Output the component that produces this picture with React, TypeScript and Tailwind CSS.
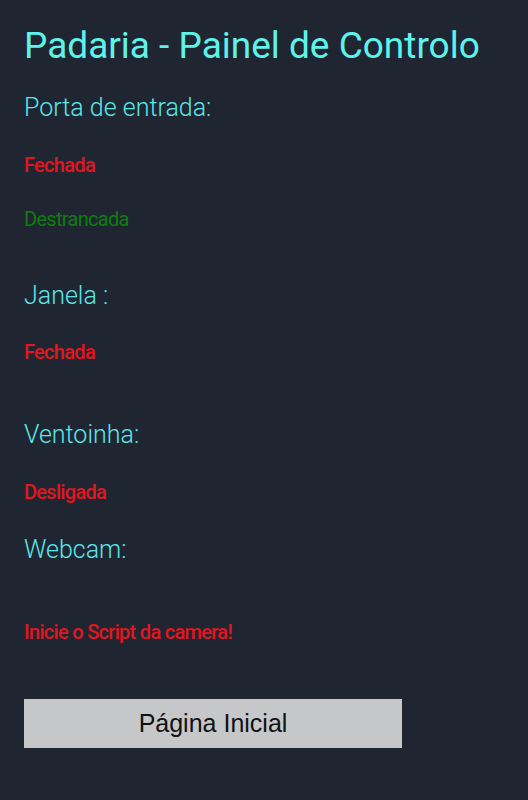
import React from "react";

const label = "text-[25px] leading-[28px] font-light text-[#5ce6e8]";
const bad = "text-[20px] leading-[24px] font-medium tracking-[-0.7px] text-[#e3161f]";
const good = "text-[20px] leading-[24px] tracking-[-0.7px] text-[#0e7d10]";

export default function App() {
  return (
    <div className="min-h-[800px] w-full bg-[#1f2632] px-6 pt-[26px] font-['Roboto',sans-serif]">
      <h1 className="text-[37px] leading-[40px] font-normal text-[#5ef3ea]">
        Padaria - Painel de Controlo
      </h1>

      <h2 className={`mt-[28px] ${label}`}>Porta de entrada:</h2>
      <p className={`mt-[31px] ${bad}`}>Fechada</p>
      <p className={`mt-[30px] ${good}`}>Destrancada</p>

      <h2 className={`mt-[51px] ${label}`}>Janela :</h2>
      <p className={`mt-[30px] ${bad}`}>Fechada</p>

      <h2 className={`mt-[57px] ${label}`}>Ventoinha:</h2>
      <p className={`mt-[31px] ${bad}`}>Desligada</p>

      <h2 className={`mt-[32px] ${label}`}>Webcam:</h2>
      <p className={`mt-[56px] ${bad}`}>Inicie o Script da camera!</p>

      <button className="mt-[55px] flex h-[49px] w-[378px] items-center justify-center bg-[#c6c7c9] font-['Liberation_Sans',Arial,sans-serif] text-[25px] text-[#111111]">
        Página Inicial
      </button>
    </div>
  );
}
